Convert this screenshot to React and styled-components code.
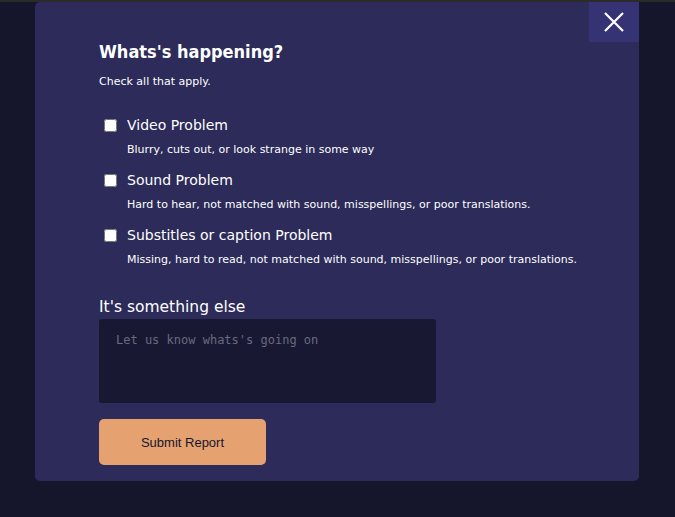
import React from "react";
import styled, { createGlobalStyle } from "styled-components";

const Global = createGlobalStyle`
  html, body { margin: 0; padding: 0; }
  body {
    background: #15152c;
    border-top: 2px solid #2b2b2b;
    font-family: "DejaVu Sans", sans-serif;
    color: #ffffff;
    min-height: 515px;
  }
`;

const Modal = styled.div`
  position: relative;
  margin-left: 35px;
  width: 604px;
  height: 479px;
  box-sizing: border-box;
  background: #2c2b59;
  border-radius: 5px;
  padding: 37px 20px 0 64px;
`;

const Close = styled.button`
  position: absolute;
  top: 0;
  right: 0;
  width: 50px;
  height: 40px;
  border: none;
  background: #363374;
  display: flex;
  align-items: center;
  justify-content: center;
  padding: 0;
  cursor: pointer;
`;

const Title = styled.h2`
  margin: 0;
  font-family: "DejaVu Sans Condensed", "DejaVu Sans", sans-serif;
  font-stretch: condensed;
  font-weight: bold;
  font-size: 18px;
  line-height: 26px;
`;

const Sub = styled.p`
  margin: 10px 0 0 0;
  font-size: 11px;
  line-height: 14px;
`;

const List = styled.div`
  margin-top: 28px;
  display: flex;
  flex-direction: column;
  gap: 15px;
`;

const Option = styled.label`
  display: grid;
  grid-template-columns: 28px 1fr;
  row-gap: 10px;
  align-items: center;
`;

const Box = styled.input`
  margin: 0 0 0 5px;
  width: 13px;
  height: 13px;
`;

const OptTitle = styled.span`
  font-size: 14px;
  line-height: 16px;
`;

const OptDesc = styled.span`
  grid-column: 2;
  font-size: 11px;
  line-height: 14px;
  white-space: nowrap;
`;

const ElseLabel = styled.div`
  margin-top: 30px;
  font-size: 15.5px;
  line-height: 20px;
`;

const Area = styled.textarea`
  display: block;
  margin-top: 2px;
  width: 337px;
  height: 84px;
  box-sizing: border-box;
  border: none;
  border-radius: 3px;
  background: #191833;
  color: #ddd;
  padding: 14px 17px;
  resize: none;
  font-family: "DejaVu Sans Mono", monospace;
  font-size: 12px;
  &::placeholder { color: #6a6a7e; }
`;

const Submit = styled.button`
  display: block;
  margin-top: 16px;
  width: 167px;
  height: 46px;
  border: none;
  border-radius: 5px;
  background: #e5a170;
  color: #17162e;
  font-family: "Liberation Sans", Arial, sans-serif;
  font-size: 13px;
`;

const options = [
  ["Video Problem", "Blurry, cuts out, or look strange in some way"],
  ["Sound Problem", "Hard to hear, not matched with sound, misspellings, or poor translations."],
  ["Substitles or caption Problem", "Missing, hard to read, not matched with sound, misspellings, or poor translations."],
];

export default function App() {
  return (
    <>
      <Global />
      <Modal>
        <Close aria-label="close">
          <svg width="22" height="22" viewBox="0 0 22 22">
            <path d="M2 2L20 20M20 2L2 20" stroke="#fff" strokeWidth="2.2" />
          </svg>
        </Close>
        <Title>Whats's happening?</Title>
        <Sub>Check all that apply.</Sub>
        <List>
          {options.map(([t, d]) => (
            <Option key={t}>
              <Box type="checkbox" />
              <OptTitle>{t}</OptTitle>
              <OptDesc>{d}</OptDesc>
            </Option>
          ))}
        </List>
        <ElseLabel>It's something else</ElseLabel>
        <Area placeholder="Let us know whats's going on" />
        <Submit>Submit Report</Submit>
      </Modal>
    </>
  );
}
